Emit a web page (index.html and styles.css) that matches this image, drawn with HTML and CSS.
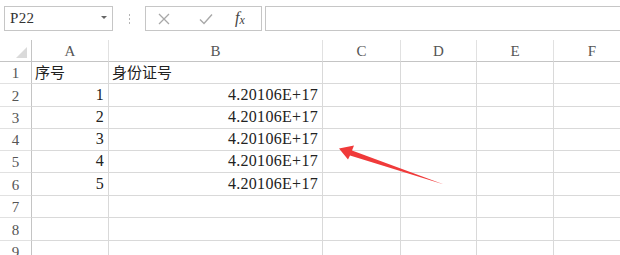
FILE: index.html
```html
<!DOCTYPE html>
<html lang="zh-CN">

<head>
  <meta charset="UTF-8">
  <title>身份证号</title>
  <link rel="stylesheet" href="styles.css">
</head>

<body>
  <div class="toolbar">
    <div class="namebox">
      <span class="ref">P22</span>
      <span class="drop"></span>
    </div>
    <div class="grip"><i></i><i></i><i></i></div>
    <div class="fxbox">
      <svg class="ic-x" width="12" height="12" viewBox="0 0 12 12">
        <path d="M1 1 L11 11 M11 1 L1 11" stroke="#a8a8a8" stroke-width="1.3" fill="none" />
      </svg>
      <svg class="ic-ok" width="14" height="12" viewBox="0 0 14 12">
        <path d="M1 6.5 L5 10.5 L13 1.5" stroke="#a8a8a8" stroke-width="1.4" fill="none" />
      </svg>
      <span class="ic-fx">f<sub>x</sub></span>
    </div>
    <div class="formula"></div>
  </div>

  <div class="sheet">
    <div class="grid">
      <div class="hd corner"><span class="tri"></span></div>
      <div class="hd col">A</div>
      <div class="hd col">B</div>
      <div class="hd col">C</div>
      <div class="hd col">D</div>
      <div class="hd col">E</div>
      <div class="hd col">F</div>

      <div class="hd row">1</div>
      <div class="c zh">序号</div>
      <div class="c zh">身份证号</div>
      <div class="c"></div><div class="c"></div><div class="c"></div><div class="c"></div>

      <div class="hd row">2</div>
      <div class="c num">1</div>
      <div class="c num">4.20106E+17</div>
      <div class="c"></div><div class="c"></div><div class="c"></div><div class="c"></div>

      <div class="hd row">3</div>
      <div class="c num">2</div>
      <div class="c num">4.20106E+17</div>
      <div class="c"></div><div class="c"></div><div class="c"></div><div class="c"></div>

      <div class="hd row">4</div>
      <div class="c num">3</div>
      <div class="c num">4.20106E+17</div>
      <div class="c"></div><div class="c"></div><div class="c"></div><div class="c"></div>

      <div class="hd row">5</div>
      <div class="c num">4</div>
      <div class="c num">4.20106E+17</div>
      <div class="c"></div><div class="c"></div><div class="c"></div><div class="c"></div>

      <div class="hd row">6</div>
      <div class="c num">5</div>
      <div class="c num">4.20106E+17</div>
      <div class="c"></div><div class="c"></div><div class="c"></div><div class="c"></div>

      <div class="hd row">7</div>
      <div class="c"></div><div class="c"></div><div class="c"></div><div class="c"></div><div class="c"></div><div class="c"></div>

      <div class="hd row">8</div>
      <div class="c"></div><div class="c"></div><div class="c"></div><div class="c"></div><div class="c"></div><div class="c"></div>

      <div class="hd row">9</div>
      <div class="c"></div><div class="c"></div><div class="c"></div><div class="c"></div><div class="c"></div><div class="c"></div>
    </div>

    <!-- 红色箭头 -->
    <svg class="arrow" width="620" height="215" viewBox="0 40 620 215">
      <polygon points="339,148.5 354,145.5 352,150.5 444,184.5 350,155.5 348,159.5" fill="#f03a3a" />
    </svg>
  </div>
</body>

</html>
```

FILE: styles.css
```css
* {
  margin: 0;
  padding: 0;
  box-sizing: border-box;
}

body {
  width: 620px;
  height: 255px;
  overflow: hidden;
  background: #fff;
  font-family: "Liberation Serif", "Noto Sans CJK SC", serif;
  color: #222;
}

/* 顶部名称框 + 编辑栏 */
.toolbar {
  display: flex;
  align-items: center;
  height: 40px;
  padding: 6px 0 9px 4px;
}

.namebox {
  width: 109px;
  height: 25px;
  border: 1px solid #c6c6c6;
  display: flex;
  align-items: center;
  justify-content: space-between;
  padding: 0 5px 0 5px;
}

.namebox .ref {
  font-family: "Liberation Serif", serif;
  font-size: 15px;
  color: #333;
  letter-spacing: 0.3px;
}

.namebox .drop {
  width: 0;
  height: 0;
  border-left: 3px solid transparent;
  border-right: 3px solid transparent;
  border-top: 3px solid #666;
  margin-top: -2px;
}

.grip {
  width: 32px;
  display: flex;
  flex-direction: column;
  align-items: center;
  gap: 2px;
}

.grip i {
  width: 1px;
  height: 2px;
  background: #b5b5b5;
}

.fxbox {
  width: 117px;
  height: 25px;
  border: 1px solid #c6c6c6;
  display: flex;
  align-items: center;
  padding-left: 12px;
}

.ic-x {
  margin-right: 29px;
}

.ic-ok {
  margin-right: 22px;
}

.ic-fx {
  font-family: "Liberation Serif", serif;
  font-style: italic;
  font-size: 16px;
  color: #444;
}

.ic-fx sub {
  font-size: 12px;
  vertical-align: -1px;
}

.formula {
  flex: 1;
  height: 25px;
  margin-left: 3px;
  margin-right: -2px;
  border: 1px solid #c6c6c6;
}

/* 表格 */
.sheet {
  position: relative;
}

.grid {
  display: grid;
  grid-template-columns: 32px 77px 214px 78px 76px 77px 77px;
  grid-template-rows: 22px 22px 23px 22px 22px 22px 23px 22px 23px 22px;
  width: 633px;
}

.hd {
  color: #555;
  font-size: 15px;
  display: flex;
  align-items: center;
  justify-content: center;
}

.corner {
  position: relative;
  border-right: 1px solid #c4c4c4;
  border-bottom: 1px solid #c4c4c4;
}

.corner .tri {
  position: absolute;
  right: 4px;
  bottom: 3px;
  width: 0;
  height: 0;
  border-left: 11px solid transparent;
  border-bottom: 11px solid #dadada;
}

.col {
  border-right: 1px solid #e1e1e1;
  border-bottom: 1px solid #c4c4c4;
  padding-top: 1px;
}

.row {
  border-right: 1px solid #c4c4c4;
  border-bottom: 1px solid #e1e1e1;
  padding-top: 2px;
}

.c {
  border-right: 1px solid #d9d9d9;
  border-bottom: 1px solid #d9d9d9;
  display: flex;
  align-items: flex-end;
  padding: 0 4px 1px 3px;
  font-size: 15px;
  white-space: nowrap;
}

.zh {
  font-family: "Noto Sans CJK SC", sans-serif;
  font-size: 15px;
  line-height: 20px;
  color: #222;
}

.num {
  justify-content: flex-end;
  font-family: "Liberation Serif", serif;
  font-size: 16px;
  line-height: 20px;
  letter-spacing: 0.3px;
  color: #222;
}

.arrow {
  position: absolute;
  left: 0;
  top: 0;
  pointer-events: none;
}
```
